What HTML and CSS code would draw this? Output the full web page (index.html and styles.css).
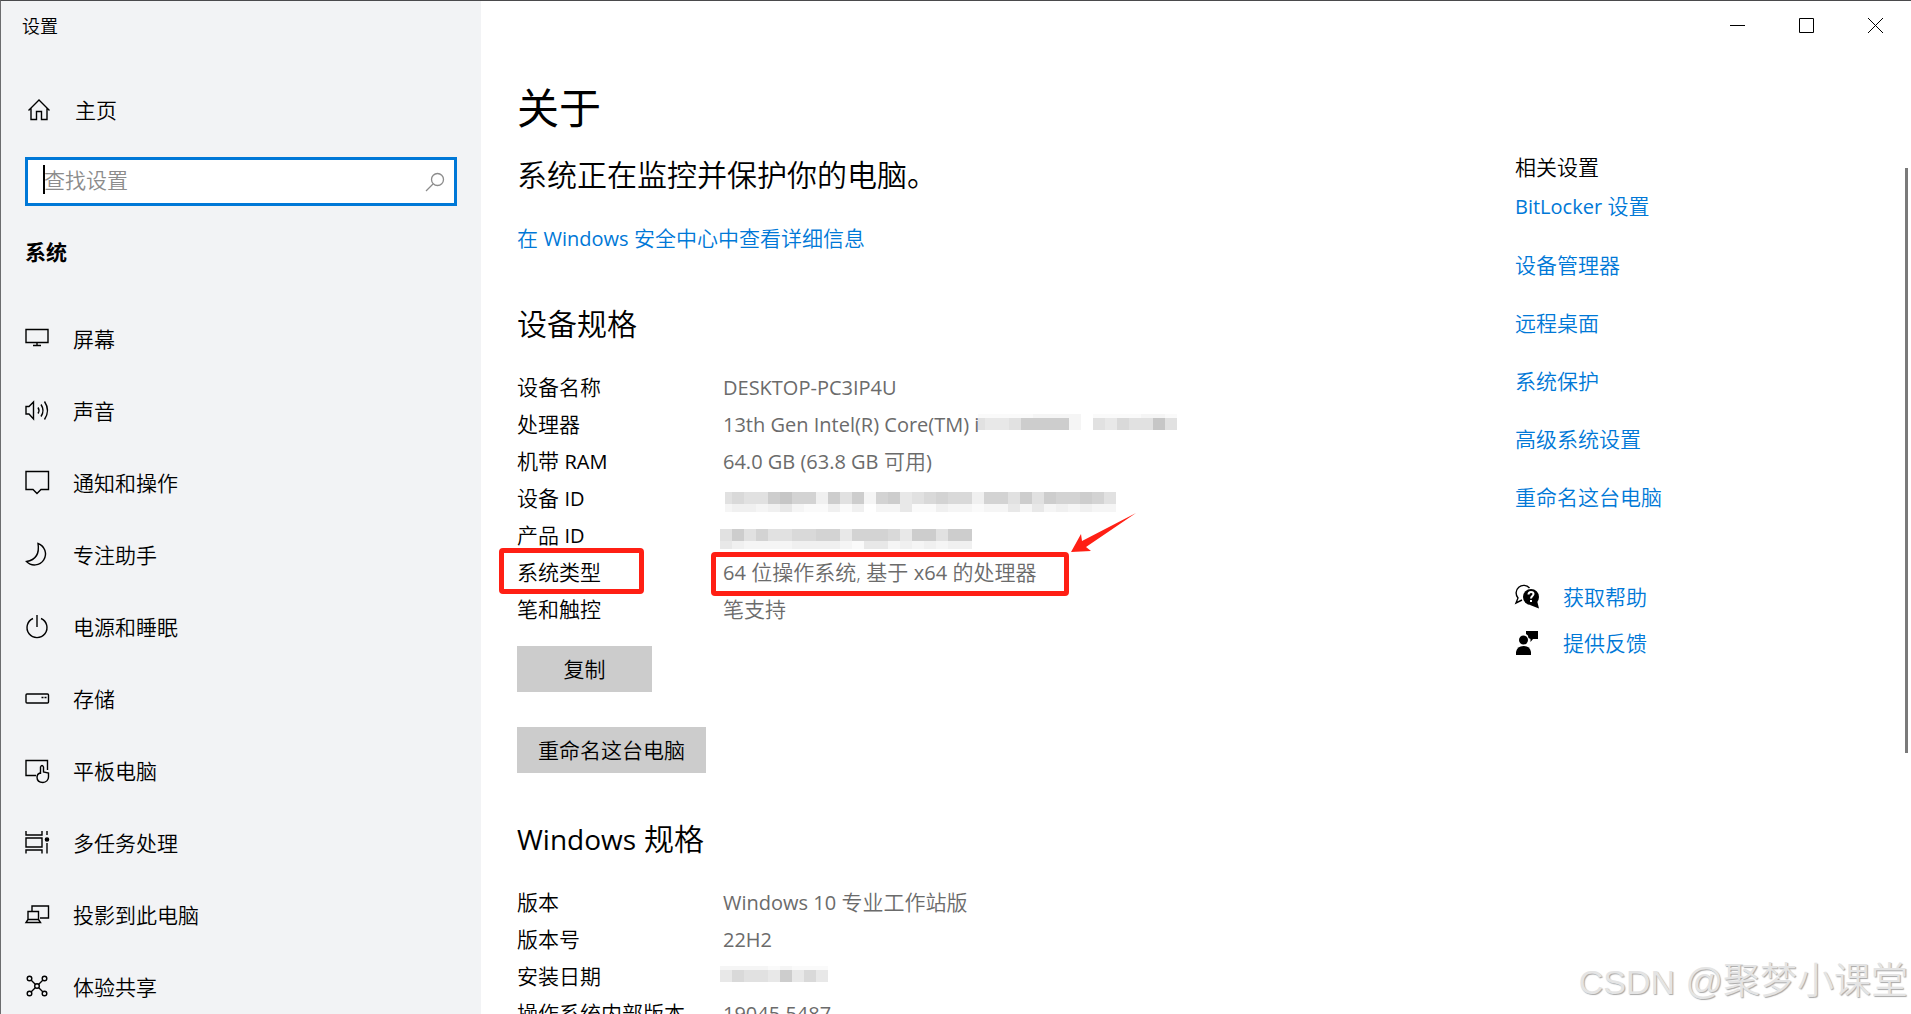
FILE: index.html
```
<!DOCTYPE html>
<html lang="zh-CN">
<head>
	<meta charset="UTF-8">
	<title>设置</title>
	<link rel="stylesheet" href="styles.css">
</head>
<body>
	<div class="window">
		<div class="sidebar">
			<div class="title">设置</div>
			<a class="home" href="#">
				<svg class="icon" viewBox="0 0 24 24"><path d="M1.500 12.500L12 2l10.500 10.500M4 10.500V21.500h5.500v-8h5v8H20V10.500"/></svg>
				<span>主页</span>
			</a>
			<div class="search">
				<input type="text" class="search-input" placeholder="查找设置" aria-label="查找设置" />
				<span class="caret"></span>
				<svg class="search-icon" viewBox="0 0 20 20"><circle cx="12.500" cy="7.500" r="6"/><path d="M8 12L1 19"/></svg>
			</div>
			<h2 class="group">系统</h2>
			<ul class="nav">
				<li><a href="#"><svg class="icon" viewBox="0 0 24 24"><path d="M1 2.500h22v13H1zM12 15.500v3M8 18.500h8"/></svg><span>屏幕</span></a></li>
				<li><a href="#"><svg class="icon" viewBox="0 0 24 24"><path d="M1 7.500h3L8.500 3v17L4 15H1zM13 8.500q2 3 0 6M16 5.500q4 6 0 12M19.500 2.500q6 9 0 18"/></svg><span>声音</span></a></li>
				<li><a href="#"><svg class="icon" viewBox="0 0 24 24"><path d="M1 .5h22.500v18H16l-4 4-4-4H1z"/></svg><span>通知和操作</span></a></li>
				<li><a href="#"><svg class="icon" viewBox="0 0 24 24"><path d="M13 .5a11 11 0 1 1-11.500 18Q15.500 16 13 .5z"/></svg><span>专注助手</span></a></li>
				<li><a href="#"><svg class="icon" viewBox="0 0 24 24"><path d="M12 0v12M8 3.500a10 10 0 1 0 8 0"/></svg><span>电源和睡眠</span></a></li>
				<li><a href="#"><svg class="icon" viewBox="0 0 24 24"><rect x="1" y="7" width="22.500" height="9" rx="1"/><path d="M16.500 10.500h2M19.500 10.500h2"/></svg><span>存储</span></a></li>
				<li><a href="#"><svg class="icon" viewBox="0 0 24 24"><path d="M11 16.500H1v-15h21.500V11M15.500 15V8q1.500-3 3 0v5l5 1v4c0 3-2.500 5.500-5.500 5.500-4 0-6-2-6-5.500 0-2 .5-3 3-4"/></svg><span>平板电脑</span></a></li>
				<li><a href="#"><svg class="icon" viewBox="0 0 24 24"><path d="M1 0v4h16V0M1 7h16v9H1zM1 22.500V19h16v3.500M22 0v4M22 12v10.500"/><circle class="fill" cx="22" cy="8.500" r="1.600"/></svg><span>多任务处理</span></a></li>
				<li><a href="#"><svg class="icon" viewBox="0 0 24 24"><path d="M7 8V3h16.500v12H15M3 8.500h10.500v8H3zM3 16.500L1 19.500h14.500l-2-3"/></svg><span>投影到此电脑</span></a></li>
				<li><a href="#"><svg class="icon" viewBox="0 0 24 24"><path d="M6 5l4.500 4.500M18 5l-4.500 4.500M6 17l4.500-4.500M18 17l-4.500-4.500"/><circle cx="4.500" cy="3.500" r="2.300"/><circle cx="19.500" cy="3.500" r="2.300"/><circle cx="4.500" cy="18.500" r="2.300"/><circle cx="19.500" cy="18.500" r="2.300"/><circle cx="12" cy="11" r="2.300"/></svg><span>体验共享</span></a></li>
			</ul>
		</div>

		<div class="main">
			<div class="controls">
				<button type="button" aria-label="最小化"><svg viewBox="0 0 15 15"><path d="M0 7.500h15"/></svg></button>
				<button type="button" aria-label="最大化"><svg viewBox="0 0 15 15"><path d="M.5.5h14v14H.5z"/></svg></button>
				<button type="button" aria-label="关闭"><svg viewBox="0 0 15 15"><path d="M0 0l15 15M15 0L0 15"/></svg></button>
			</div>
			<div class="columns">
				<div class="content">
					<h1>关于</h1>
					<h2 class="status">系统正在监控并保护你的电脑。</h2>
					<a class="detail" href="#">在 <span class="en">Windows</span> 安全中心中查看详细信息</a>

					<h2 class="section">设备规格</h2>
					<dl class="specs">
						<dt>设备名称</dt>
						<dd><span class="en">DESKTOP-PC3IP4U</span></dd>
						<dt>处理器</dt>
						<dd><span class="en">13th Gen Intel(R) Core(TM) i</span><svg class="mosaic" data-skip="5" data-top="iiiiihhhh-iiiihhi" data-mid="effebbbbh-efdeeae" data-low=""></svg></dd>
						<dt>机带 <span class="en">RAM</span></dt>
						<dd><span class="en">64.0 GB (63.8 GB</span> 可用<span class="en">)</span></dd>
						<dt>设备 <span class="en">ID</span></dt>
						<dd><svg class="mosaic" data-skip="5" data-top="" data-mid="edeebaccgbebhcbfedcddgccebebccbce" data-low="hgghgfhiigig-hhfiighhihhfhfhghghh"></svg></dd>
						<dt>产品 <span class="en">ID</span></dt>
						<dd><svg class="mosaic" data-skip="0" data-top="" data-mid="ebeceeddccfcccdfbbebb" data-low="fghhhhgggghiffhghghgg"></svg></dd>
						<dt class="mark-key">系统类型</dt>
						<dd class="mark-value"><span class="en">64</span> 位操作系统, 基于 <span class="en">x64</span> 的处理器
							<svg class="arrow" viewBox="0 0 66 40"><path d="M0 39L10 21l1 7L65 0 15 34l5 4z"/></svg>
						</dd>
						<dt>笔和触控</dt>
						<dd>笔支持</dd>
					</dl>
					<button type="button" class="btn btn-copy">复制</button>
					<button type="button" class="btn btn-rename">重命名这台电脑</button>

					<h2 class="section"><span class="en">Windows</span> 规格</h2>
					<dl class="specs">
						<dt>版本</dt>
						<dd><span class="en">Windows 10</span> 专业工作站版</dd>
						<dt>版本号</dt>
						<dd><span class="en">22H2</span></dd>
						<dt>安装日期</dt>
						<dd><svg class="mosaic" data-skip="0" data-top="hhhhihiii" data-mid="fdeefbfdf" data-low=""></svg></dd>
						<dt>操作系统内部版本</dt>
						<dd><span class="en">19045.5487</span></dd>
					</dl>
				</div>

				<div class="related">
					<h3>相关设置</h3>
					<ul class="links">
						<li><a href="#"><span class="en">BitLocker</span> 设置</a></li>
						<li><a href="#">设备管理器</a></li>
						<li><a href="#">远程桌面</a></li>
						<li><a href="#">系统保护</a></li>
						<li><a href="#">高级系统设置</a></li>
						<li><a href="#">重命名这台电脑</a></li>
					</ul>
					<ul class="support">
						<li>
							<svg class="icon" viewBox="0 0 24 24"><path d="M14.500 3A7.500 7.500 0 1 0 3 13l-2 5 6-3"/><circle class="solid" cx="16" cy="12" r="8"/><path class="solid" d="M15 20l9 3.500-2-8z"/><path class="cut" d="M13.500 9.500c0-3.500 5-3 5-.5 0 2-2.500 2-2.500 4.500M16 15v2"/></svg>
							<a href="#">获取帮助</a>
						</li>
						<li>
							<svg class="icon" viewBox="0 0 24 24"><path class="solid" d="M11 0h12v8h-5l-2.500 3V8l-2-1Q13.500 4 11 3z"/><circle class="solid" cx="8.500" cy="9" r="4.500"/><path class="solid" d="M1 24v-3q1-6 7.500-6t7.500 6v3z"/></svg>
							<a href="#">提供反馈</a>
						</li>
					</ul>
				</div>
			</div>
		</div>
		<div class="scrollbar"></div>
		<div class="watermark"><span class="site">CSDN</span> @聚梦小课堂</div>
	</div>

<script src="mosaic.js"></script>
</body>
</html>
```

FILE: styles.css
```
*,
*::before,
*::after{
	margin: 0;
	padding: 0;
	box-sizing: border-box;
}
body{
	font-family: "Open Sans", "Noto Sans CJK SC", sans-serif;
	font-size: 21px;
	font-weight: 350;
	line-height: 32px;
	color: #000;
	background: #fff;
}
ul{
	list-style: none;
}
a{
	color: #0078d7;
	text-decoration: none;
}
button{
	font: inherit;
	border: none;
}
.en{
	font-size: 20px;
	font-weight: 400;
}
.window{
	display: flex;
	position: relative;
	height: 100vh;
	overflow: hidden;
	border-top: 1px solid #4a4a4c;
	border-left: 1px solid #6c6c6e;
}
.icon{
	width: 24px;
	height: 24px;
	flex: none;
	fill: none;
	stroke: #000;
	stroke-width: 1.4;
	overflow: visible;
}
.icon .fill{
	fill: #000;
}
.icon .solid{
	fill: #000;
	stroke: none;
}
.icon .cut{
	stroke: #fff;
	stroke-width: 2;
}

/* 左侧导航 */
.sidebar{
	width: 480px;
	flex: none;
	padding: 13px 24px 0;
	background: #f2f3f5;
}
.title{
	font-size: 18px;
	line-height: 24px;
	margin-left: -3px;
}
.home{
	display: flex;
	align-items: center;
	gap: 24px;
	margin-top: 56px;
	padding-left: 2px;
	color: #000;
}
.search{
	position: relative;
	margin-top: 31px;
	height: 49px;
}
.search-input{
	width: 100%;
	height: 100%;
	padding: 0 48px 3px 16px;
	border: 3px solid #0078d7;
	background: #fff;
	font: inherit;
	outline: none;
}
.search-input::placeholder{
	color: #8c8c8c;
}
.caret{
	position: absolute;
	left: 18px;
	top: 8px;
	width: 2px;
	height: 29px;
	background: #000;
}
.search-icon{
	position: absolute;
	right: 12px;
	top: 15px;
	width: 20px;
	height: 20px;
	fill: none;
	stroke: #8c8c8c;
	stroke-width: 1.3;
}
.group{
	margin-top: 30px;
	font-size: 21px;
	font-weight: 700;
}
.nav{
	margin-top: 35px;
}
.nav a{
	display: flex;
	align-items: center;
	gap: 24px;
	height: 72px;
	color: #000;
}

/* 右侧内容 */
.main{
	flex: 1;
}
.controls{
	display: flex;
	justify-content: flex-end;
	height: 49px;
	padding-right: 1px;
}
.controls button{
	width: 69px;
	background: none;
}
.controls svg{
	display: block;
	width: 15px;
	height: 15px;
	margin: 0 auto;
	fill: none;
	stroke: #000;
}
.columns{
	display: flex;
}
.content{
	flex: 1;
	padding: 30px 0 0 36px;
}
.content h1{
	font-size: 42px;
	font-weight: 400;
	line-height: 56px;
}
.content h2{
	font-size: 30px;
	font-weight: 350;
	line-height: 40px;
}
.content h2 .en{
	font-size: 28px;
}
.content .status{
	margin-top: 19px;
}
.detail{
	display: block;
	margin-top: 27px;
}
.content .section{
	margin-top: 49px;
}
.specs{
	display: grid;
	grid-template-columns: 206px 1fr;
	grid-auto-rows: 37px;
	align-items: center;
	margin-top: 25px;
	line-height: 37px;
	white-space: nowrap;
}
.specs dd{
	display: flex;
	align-items: center;
	white-space: pre;
	color: #6b6b6b;
}
.mosaic{
	height: 28px;
	flex: none;
	margin-left: -3px;
	shape-rendering: crispEdges;
}
.en + .mosaic{
	margin-left: -6px;
}
.specs .mark-key,
.specs .mark-value{
	position: relative;
	display: block;
	white-space: nowrap;
}
.mark-key::after,
.mark-value::after{
	content: "";
	position: absolute;
	top: -6px;
	left: -18px;
	width: 145px;
	height: 46px;
	border: 5px solid #ff1f14;
	border-radius: 4px;
}
.mark-value::after{
	top: -2px;
	left: -12px;
	width: 358px;
	height: 44px;
}
.arrow{
	position: absolute;
	left: 348px;
	top: -41px;
	width: 66px;
	height: 40px;
	fill: #ff1f14;
}
.btn{
	display: block;
	height: 46px;
	background: #ccc;
	color: #000;
}
.btn-copy{
	width: 135px;
	margin-top: 18px;
}
.btn-rename{
	padding: 0 21px;
	margin-top: 35px;
}
.btn-rename + .section{
	margin-top: 46px;
}

/* 相关设置 */
.related{
	width: 396px;
	padding-top: 107px;
}
.related h3{
	font-size: 21px;
	font-weight: 350;
	line-height: 20px;
}
.links li{
	line-height: 58px;
}
.support{
	margin-top: 48px;
}
.support li{
	display: flex;
	align-items: center;
	gap: 24px;
	height: 46px;
}
.scrollbar{
	position: absolute;
	right: 3px;
	top: 167px;
	width: 3px;
	height: 585px;
	background: #7a7a7a;
}
.watermark{
	position: absolute;
	right: 3px;
	bottom: 4px;
	font-family: "Liberation Sans", "Noto Sans CJK SC", sans-serif;
	font-size: 37px;
	line-height: 56px;
	color: #e4e4e4;
	text-shadow: 1px 1px 1px #a8a8a8;
}
.watermark .site{
	font-size: 34px;
}
```

FILE: mosaic.js
```
// 打码色块：每个字母对应一个灰度，每格 12px
var shades = {
	a: '#c6c6c6', b: '#cdcdcd', c: '#d3d3d3', d: '#d9d9d9', e: '#e1e1e1',
	f: '#e8e8e8', g: '#f0f0f0', h: '#f5f5f5', i: '#fafafa'
};
var mosaics = document.getElementsByClassName('mosaic');

function drawRow(svg, cells, y, height){
	var skip = Number(svg.dataset.skip);
	for(var i = 0; i < cells.length; i++){
		if(!shades[cells[i]]){
			continue;
		}
		// 第一格可能被截掉一部分
		var cut = i == 0 ? skip : 0;
		var rect = document.createElementNS('http://www.w3.org/2000/svg', 'rect');
		rect.setAttribute('x', i*12 + cut);
		rect.setAttribute('y', y);
		rect.setAttribute('width', 12 - cut);
		rect.setAttribute('height', height);
		rect.setAttribute('fill', shades[cells[i]]);
		svg.appendChild(rect);
	}
}

for(var n = 0; n < mosaics.length; n++){
	var svg = mosaics[n];
	svg.setAttribute('width', svg.dataset.mid.length*12);
	drawRow(svg, svg.dataset.top, 3, 4);
	drawRow(svg, svg.dataset.mid, 7, 12);
	drawRow(svg, svg.dataset.low, 19, 8);
}
```
